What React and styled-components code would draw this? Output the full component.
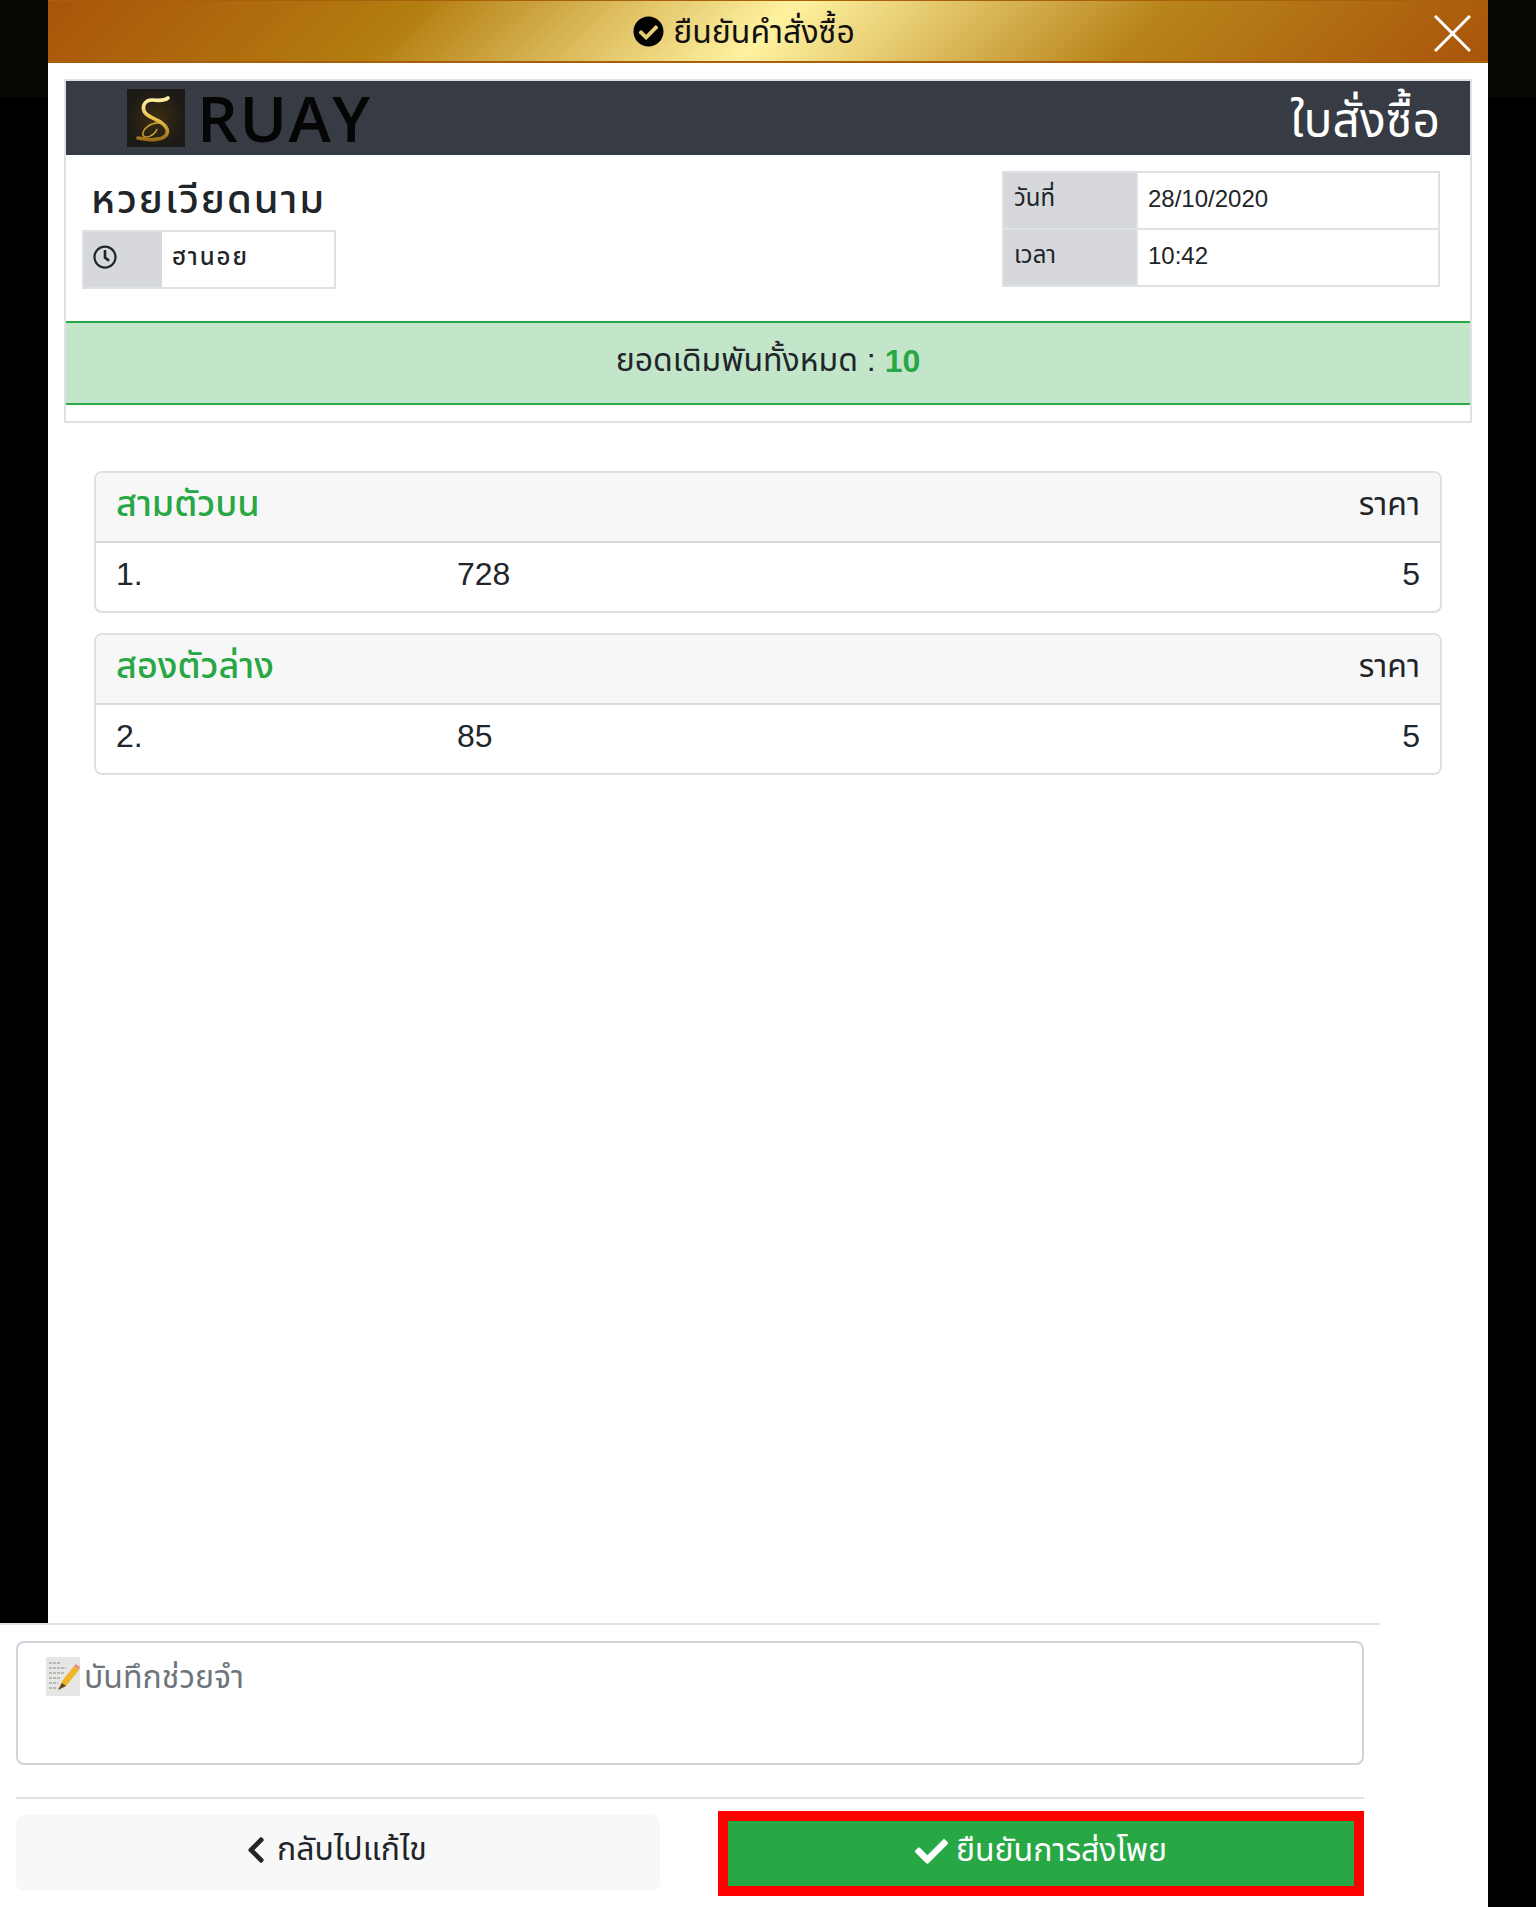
import React from "react";
import styled, { createGlobalStyle } from "styled-components";
import { FaCheckCircle, FaCheck, FaChevronLeft, FaRegClock } from "react-icons/fa";

const GlobalStyle = createGlobalStyle`
  * {
    box-sizing: border-box;
  }

  body {
    margin: 0;
    background: #000;
    color: #212529;
    font-family: "Liberation Sans", "Noto Sans", "Noto Sans Thai", sans-serif;
    font-size: 32px;
  }
`;

const Page = styled.div`
  width: 1536px;
  height: 1907px;
  overflow: hidden;
  background: linear-gradient(#090702 0 97px, #000 97px);
`;

const Modal = styled.div`
  width: 1440px;
  height: 1907px;
  margin-left: 48px;
  display: flex;
  flex-direction: column;
  background: #fff;
`;

const TitleBar = styled.div`
  position: relative;
  flex: none;
  height: 63px;
  display: flex;
  align-items: center;
  justify-content: center;
  gap: 9px;
  padding-right: 48px;
  border-top: 1px solid #a9600a;
  border-bottom: 2px solid #a9600a;
  background: linear-gradient(
    135deg,
    #a9540a 0%,
    #b37d10 25%,
    #fff2a0 50%,
    #b8841a 75%,
    #a9540a 100%
  );
  color: #111;
  font-size: 32px;
`;

const TitleText = styled.span`
  padding-top: 3px;
`;

const CloseButton = styled.button`
  position: absolute;
  top: 14px;
  right: 17px;
  width: 37px;
  height: 37px;
  padding: 0;
  border: 0;
  background: none;
  color: #fff;
`;

const Invoice = styled.div`
  flex: none;
  height: 344px;
  margin: 16px 16px 0;
  border: 2px solid #dee2e6;
`;

const InvoiceBar = styled.div`
  height: 74px;
  display: flex;
  align-items: center;
  justify-content: space-between;
  padding: 0 30px 0 61px;
  background: #373b43;
`;

const Brand = styled.div`
  display: flex;
  align-items: center;
  gap: 12px;
`;

const BrandName = styled.span`
  font-family: "Open Sans", sans-serif;
  font-size: 64px;
  font-weight: 600;
  line-height: 74px;
  letter-spacing: 1.5px;
  color: #050505;
  filter: blur(0.4px);
`;

const InvoiceTitle = styled.span`
  padding-top: 8px;
  font-size: 48px;
  color: #fff;
`;

const InfoRow = styled.div`
  height: 166px;
  display: flex;
  justify-content: space-between;
  padding: 16px 30px 0 16px;
`;

const LotteryName = styled.h2`
  height: 59px;
  margin: 0;
  padding-left: 9px;
  font-size: 40px;
  font-weight: 500;
  line-height: 56px;
  letter-spacing: 2px;
`;

const MarketBox = styled.div`
  width: 254px;
  height: 59px;
  display: flex;
  border: 2px solid #dee2e6;
`;

const MarketIcon = styled.div`
  width: 78px;
  display: flex;
  align-items: center;
  padding: 0 0 6px 9px;
  background: #d6d8db;
  font-size: 24px;
`;

const MarketName = styled.div`
  display: flex;
  align-items: center;
  padding: 0 0 4px 10px;
  font-size: 24px;
  font-weight: 500;
  letter-spacing: 2px;
`;

const MetaTable = styled.div`
  width: 438px;
  height: 116px;
  display: grid;
  grid-template-columns: 132px 1fr;
  grid-auto-rows: 1fr;
  gap: 2px 2px;
  border: 2px solid #dee2e6;
  background: #dee2e6;
`;

const MetaLabel = styled.div`
  display: flex;
  align-items: center;
  padding: 0 0 3px 10px;
  background: #d6d8db;
  font-size: 24px;
`;

const MetaValue = styled.div`
  display: flex;
  align-items: center;
  padding: 0 0 3px 10px;
  background: #fff;
  font-size: 24px;
`;

const TotalBand = styled.div`
  height: 84px;
  display: flex;
  align-items: center;
  justify-content: center;
  gap: 9px;
  padding-bottom: 4px;
  border-top: 2px solid #28a745;
  border-bottom: 2px solid #28a745;
  background: #c3e6cb;
  font-size: 32px;
`;

const TotalAmount = styled.strong`
  color: #28a745;
`;

const Cards = styled.div`
  flex: none;
  display: flex;
  flex-direction: column;
  gap: 20px;
  margin: 48px 46px 0 46px;
`;

const Card = styled.div`
  height: 142px;
  display: flex;
  flex-direction: column;
  border: 2px solid #dfdfdf;
  border-radius: 8px;
  overflow: hidden;
`;

const CardHeader = styled.div`
  height: 70px;
  flex: none;
  display: flex;
  align-items: center;
  justify-content: space-between;
  padding: 0 20px 4px;
  border-bottom: 2px solid #d9d9dc;
  background: #f7f7f7;
`;

const BetType = styled.span`
  font-size: 36px;
  font-weight: 500;
  color: #28a745;
`;

const CardRow = styled.div`
  flex: 1;
  display: grid;
  grid-template-columns: 341px 1fr auto;
  align-items: center;
  padding: 0 20px 5px;
`;

const Footer = styled.div`
  flex: none;
  width: 1380px;
  height: 284px;
  margin-top: auto;
  margin-left: -48px;
  padding: 16px 16px 0;
  border-top: 2px solid #dee2e6;
  background: #fff;
`;

const NoteField = styled.div`
  position: relative;
  height: 124px;
`;

const NoteInput = styled.textarea`
  display: block;
  width: 100%;
  height: 100%;
  padding: 11px 24px 0 66px;
  border: 2px solid #ced4da;
  border-radius: 8px;
  outline: none;
  resize: none;
  font-family: inherit;
  font-size: 32px;

  &::placeholder {
    color: #6c757d;
    opacity: 1;
  }
`;

const NoteIcon = styled.svg`
  position: absolute;
  top: 16px;
  left: 30px;
  width: 34px;
  height: 39px;
`;

const Divider = styled.hr`
  height: 2px;
  margin: 32px 0 12px;
  border: 0;
  background: #dee2e6;
`;

const Actions = styled.div`
  display: grid;
  grid-template-columns: 644px 646px;
  justify-content: space-between;
  align-items: center;
`;

const BackButton = styled.button`
  height: 76px;
  margin-bottom: 1px;
  display: flex;
  align-items: center;
  justify-content: center;
  gap: 6px;
  padding: 0 8px 7px 0;
  border: 0;
  border-radius: 8px;
  background: #f8f8f8;
  color: #212529;
  font-family: inherit;
  font-size: 32px;
`;

const SubmitButton = styled.button`
  height: 85px;
  display: flex;
  align-items: center;
  justify-content: center;
  gap: 8px;
  padding: 0 0 5px;
  border: 10px solid #f00;
  background: #28a745;
  color: #fff;
  font-family: inherit;
  font-size: 32px;
`;

const bets = [
  { type: "สามตัวบน", index: "1.", number: "728", price: "5" },
  { type: "สองตัวล่าง", index: "2.", number: "85", price: "5" },
];

const BrandLogo = () => (
  <svg width="58" height="58" viewBox="0 0 58 58">
    <defs>
      <radialGradient id="logoBg">
        <stop offset="0%" stopColor="#3d2d12" />
        <stop offset="100%" stopColor="#1c1a17" />
      </radialGradient>
      <linearGradient id="logoGold" x1="0" y1="0" x2="0" y2="1">
        <stop offset="0%" stopColor="#fff0a8" />
        <stop offset="50%" stopColor="#e8c24a" />
        <stop offset="100%" stopColor="#9a6c18" />
      </linearGradient>
    </defs>
    <rect width="58" height="58" fill="url(#logoBg)" />
    <path
      d="M33 34C24 33 15 40 16 46C18 51 28 46 30 40"
      fill="none"
      stroke="#c79a30"
      strokeWidth="1.6"
    />
    <path
      d="M41 9C36 13 30 11 25 11C18 11 15 17 17 22C20 30 36 30 40 40C42 46 36 50 30 50C24 52 16 50 11 49"
      fill="none"
      stroke="url(#logoGold)"
      strokeWidth="3.6"
      strokeLinecap="round"
    />
  </svg>
);

const App = () => {
  return (
    <Page>
      <GlobalStyle />
      <Modal>
        <TitleBar>
          <FaCheckCircle size={31} color="#000" />
          <TitleText>ยืนยันคำสั่งซื้อ</TitleText>
          <CloseButton>
            <svg width="37" height="37" viewBox="0 0 37 37">
              <path
                d="M1 1L36 36M36 1L1 36"
                stroke="currentColor"
                strokeWidth="3"
              />
            </svg>
          </CloseButton>
        </TitleBar>

        <Invoice>
          <InvoiceBar>
            <Brand>
              <BrandLogo />
              <BrandName>RUAY</BrandName>
            </Brand>
            <InvoiceTitle>ใบสั่งซื้อ</InvoiceTitle>
          </InvoiceBar>
          <InfoRow>
            <div>
              <LotteryName>หวยเวียดนาม</LotteryName>
              <MarketBox>
                <MarketIcon>
                  <FaRegClock />
                </MarketIcon>
                <MarketName>ฮานอย</MarketName>
              </MarketBox>
            </div>
            <MetaTable>
              <MetaLabel>วันที่</MetaLabel>
              <MetaValue>28/10/2020</MetaValue>
              <MetaLabel>เวลา</MetaLabel>
              <MetaValue>10:42</MetaValue>
            </MetaTable>
          </InfoRow>
          <TotalBand>
            <span>ยอดเดิมพันทั้งหมด :</span>
            <TotalAmount>10</TotalAmount>
          </TotalBand>
        </Invoice>

        <Cards>
          {bets.map((bet) => (
            <Card key={bet.index}>
              <CardHeader>
                <BetType>{bet.type}</BetType>
                <span>ราคา</span>
              </CardHeader>
              <CardRow>
                <span>{bet.index}</span>
                <span>{bet.number}</span>
                <span>{bet.price}</span>
              </CardRow>
            </Card>
          ))}
        </Cards>

        <Footer>
          <NoteField>
            <NoteInput placeholder="บันทึกช่วยจำ" />
            <NoteIcon viewBox="0 0 34 39">
              <rect width="34" height="39" fill="#e6e6e4" />
              <path
                d="M3 6H14M3 11H20M3 16H18M3 21H14M3 26H12M3 31H10"
                stroke="#8a8a8a"
                strokeWidth="1"
                strokeDasharray="3 1"
              />
              <path d="M12 33L16 24L28 9L33 13L20 29Z" fill="#f0b429" />
              <path d="M28 9L30 7L34 10L33 13Z" fill="#ee8d8d" />
              <path d="M12 33L16 26L20 29Z" fill="#5b4a2a" />
            </NoteIcon>
          </NoteField>
          <Divider />
          <Actions>
            <BackButton>
              <FaChevronLeft size={30} />
              กลับไปแก้ไข
            </BackButton>
            <SubmitButton>
              <FaCheck size={33} />
              ยืนยันการส่งโพย
            </SubmitButton>
          </Actions>
        </Footer>
      </Modal>
    </Page>
  );
};

export default App;
